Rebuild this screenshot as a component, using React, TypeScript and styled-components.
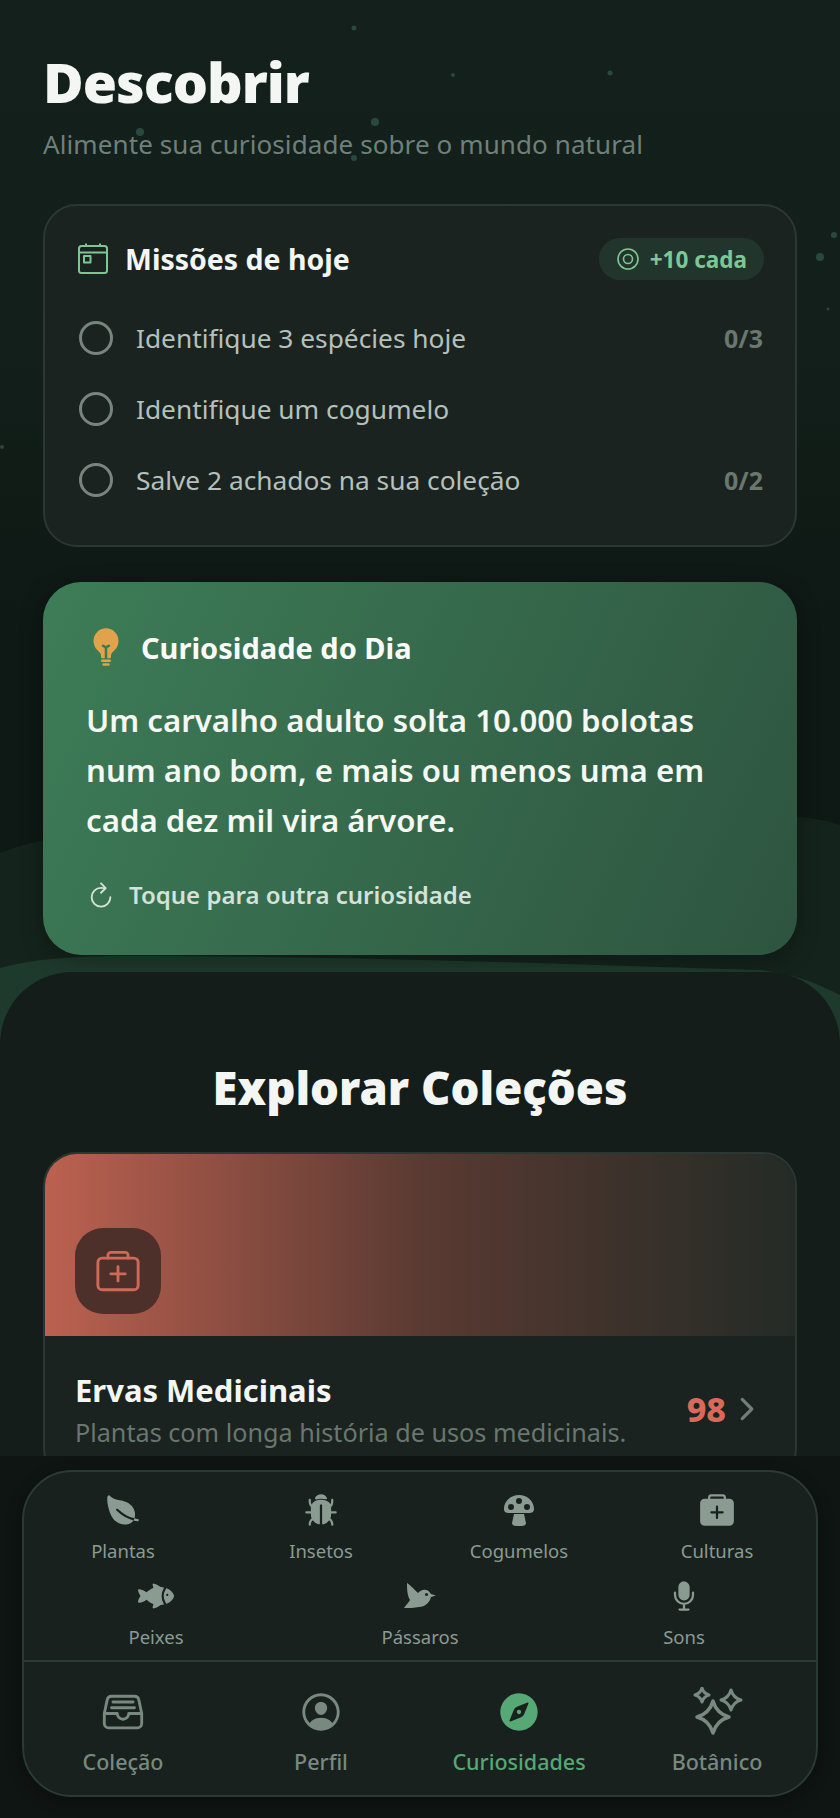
import React from "react";
import styled, { createGlobalStyle } from "styled-components";
import {
  IoBug,
  IoBulb,
  IoChevronForward,
  IoCompass,
  IoFileTrayFullOutline,
  IoFish,
  IoLeaf,
  IoMedkit,
  IoMedkitOutline,
  IoMic,
  IoPersonCircleOutline,
  IoRefreshOutline,
} from "react-icons/io5";

const GlobalStyle = createGlobalStyle`
  html, body {
    margin: 0;
    padding: 0;
    background: #0f1513;
  }
  * {
    box-sizing: border-box;
  }
`;

const Page = styled.div`
  position: relative;
  width: 840px;
  height: 1818px;
  overflow: hidden;
  background: linear-gradient(180deg, #13201b 0px, #131f1a 350px, #0e1814 620px, #0e1814 100%);
  font-family: "Noto Sans", "Open Sans", sans-serif;
  color: #f4f6f4;
`;

const Backdrop = styled.svg`
  position: absolute;
  left: 0;
  top: 0;
`;

const Content = styled.main`
  position: relative;
  padding: 48px 0 0;
`;

const Header = styled.header`
  padding: 0 43px;
`;

const Title = styled.h1`
  margin: 0;
  font-size: 55.5px;
  line-height: 68px;
  font-weight: 900;
  letter-spacing: -1px;
`;

const Subtitle = styled.p`
  margin: 10px 0 0;
  font-size: 26px;
  line-height: 36px;
  letter-spacing: 0.1px;
  color: #6f807a;
`;

const MissionCard = styled.section`
  margin: 42px 43px 0;
  height: 343px;
  padding: 32px 32px 0 32px;
  border: 2px solid #2b3733;
  border-radius: 34px;
  background: #1a2320;
`;

const MissionHead = styled.div`
  display: flex;
  align-items: center;
  justify-content: space-between;
  height: 42px;
`;

const MissionTitle = styled.div`
  display: flex;
  align-items: center;
  gap: 16px;
  font-size: 28.5px;
  font-weight: 700;
`;

const Reward = styled.div`
  display: flex;
  align-items: center;
  gap: 10px;
  height: 42px;
  margin-right: -1px;
  padding: 0 17px;
  border-radius: 21px;
  background: #22352c;
  color: #7ec795;
  font-size: 22.5px;
  font-weight: 700;
`;

const MissionList = styled.ul`
  margin: 22px 0 0;
  padding: 0;
  list-style: none;
`;

const MissionRow = styled.li`
  display: flex;
  align-items: center;
  height: 71px;
  padding-left: 2px;
  font-size: 26.3px;
  color: #b6c0bb;
`;

const Radio = styled.span`
  flex: none;
  width: 34px;
  height: 34px;
  margin-right: 23px;
  border: 3px solid #78857f;
  border-radius: 50%;
`;

const Progress = styled.span`
  margin-left: auto;
  font-size: 25px;
  font-weight: 700;
  color: #69776f;
`;

const FactCard = styled.section`
  margin: 35px 43px 0;
  height: 373px;
  padding: 44px 43px 0;
  border-radius: 38px;
  background: linear-gradient(115deg, #3d7d57 0%, #2e5440 100%);
  box-shadow: 0 6px 24px rgba(0, 0, 0, 0.28);
`;

const FactHead = styled.div`
  display: flex;
  align-items: center;
  gap: 15px;
  height: 42px;
  font-size: 29px;
  font-weight: 700;
  color: #fafbf8;
`;

const FactText = styled.p`
  margin: 27px 0 0;
  font-size: 31.2px;
  line-height: 50px;
  font-weight: 600;
  color: #f5f7f3;
`;

const FactHint = styled.div`
  display: flex;
  align-items: center;
  gap: 13px;
  margin-top: 33px;
  font-size: 24px;
  font-weight: 600;
  color: #d4e2d8;
`;

const Sheet = styled.section`
  margin-top: 17px;
  height: 900px;
  padding-top: 83px;
  border-radius: 72px 72px 0 0;
  background: #141d19;
`;

const SheetTitle = styled.h2`
  margin: 0;
  text-align: center;
  font-size: 45.5px;
  line-height: 64px;
  font-weight: 900;
`;

const CollectionCard = styled.article`
  margin: 33px 43px 0;
  border: 2px solid #2a3733;
  border-radius: 34px;
  background: #1a2320;
  overflow: hidden;
`;

const CollectionBanner = styled.div`
  display: flex;
  align-items: flex-end;
  height: 182px;
  padding: 0 0 22px 30px;
  background: linear-gradient(90deg, #bc6150 0%, #5a3a32 50%, #242b26 100%);
`;

const BannerIcon = styled.div`
  display: flex;
  align-items: center;
  justify-content: center;
  width: 86px;
  height: 86px;
  border-radius: 28px;
  background: #4e302a;
  color: #d06a58;
`;

const CollectionBody = styled.div`
  display: flex;
  align-items: center;
  justify-content: space-between;
  padding: 31px 31px 30px 30px;
`;

const CollectionName = styled.div`
  font-size: 31px;
  line-height: 47px;
  font-weight: 700;
`;

const CollectionDesc = styled.div`
  font-size: 25.2px;
  line-height: 36px;
  color: #69776f;
`;

const CollectionCount = styled.div`
  display: flex;
  align-items: center;
  gap: 4px;
  font-size: 34px;
  font-weight: 800;
  color: #d9695a;
`;

const NavArea = styled.nav`
  position: absolute;
  left: 0;
  right: 0;
  bottom: 0;
  height: 362px;
  padding: 14px 22px 0;
  background: #0f1513;
`;

const NavCard = styled.div`
  height: 327px;
  border: 2px solid #2c3a36;
  border-radius: 50px;
  background: #18211e;
  box-shadow: 0 4px 16px rgba(0, 0, 0, 0.3);
  overflow: hidden;
`;

const CategoryRow = styled.div<{ $cols: number; $height: number; $top?: number }>`
  display: grid;
  grid-template-columns: repeat(${(p) => p.$cols}, 1fr);
  height: ${(p) => p.$height}px;
  padding-top: ${(p) => p.$top ?? 0}px;
`;

const Category = styled.div`
  display: flex;
  flex-direction: column;
  align-items: center;
  color: #8a9b92;
  font-size: 18.5px;
  line-height: 24px;
`;

const CategoryIcon = styled.div`
  display: flex;
  align-items: center;
  justify-content: center;
  height: 36px;
  margin: 0 0 11px;
`;

const TabBar = styled.div`
  display: grid;
  grid-template-columns: repeat(4, 1fr);
  margin-top: 2px;
  border-top: 2px solid #2c3a36;
  padding-top: 26px;
`;

const Tab = styled.div<{ $active?: boolean }>`
  display: flex;
  flex-direction: column;
  align-items: center;
  color: ${(p) => (p.$active ? "#56a874" : "#78897f")};
  font-size: 21.5px;
  line-height: 30px;
  font-weight: 500;
`;

const TabIcon = styled.div`
  display: flex;
  align-items: center;
  justify-content: center;
  height: 48px;
  margin-bottom: 11px;

  svg {
    flex: none;
  }
`;

const particles = [
  [354, 28, 2.5],
  [453, 75, 2],
  [610, 73, 2.5],
  [375, 122, 4],
  [140, 132, 4],
  [354, 158, 3],
  [834, 235, 3],
  [820, 257, 4],
  [828, 309, 1.5],
  [2, 447, 2],
];

const MissionIcon = () => (
  <svg width="32" height="32" viewBox="0 0 32 32" fill="none" stroke="#7ec795" strokeWidth="2" strokeLinejoin="round">
    <rect x="2" y="3" width="28" height="27" rx="2.5" />
    <path d="M2 9.5h28M9 0.5v3M23 0.5v3" />
    <rect x="7" y="13" width="6.5" height="6.5" />
  </svg>
);

const TargetIcon = () => (
  <svg width="24" height="24" viewBox="0 0 24 24" fill="none" stroke="#7ec795" strokeWidth="1.6">
    <circle cx="12" cy="12" r="10" />
    <circle cx="12" cy="12" r="4.5" />
  </svg>
);

const MushroomIcon = () => (
  <svg width="32" height="32" viewBox="0 0 32 32">
    <path
      fillRule="evenodd"
      fill="#8a9b92"
      d="M16 1C8 1 1 7 1 15c0 3 2 4 5 4h20c3 0 5-1 5-4C31 7 24 1 16 1zM16 4a3 3 0 1 1 0 6 3 3 0 0 1 0-6zM8 10a3 3 0 1 1 0 6 3 3 0 0 1 0-6zM24 10a3 3 0 1 1 0 6 3 3 0 0 1 0-6z"
    />
    <path fill="#8a9b92" d="M11 20h10l2 9c0 2-2 3-4 3h-6c-2 0-4-1-4-3z" />
  </svg>
);

const BirdIcon = () => (
  <svg width="42" height="36" viewBox="5 7 42 36">
    <path
      fill="#8a9b92"
      d="M13 12C15 13 20 18 24 22C26 20 29 18 32 19C35 19 36 22 37 23L42 24.5L37 26C36 31 31 36 25 36C20 37 15 37 10 37C13 33 15 31 16 29C13 24 13 17 13 12Z"
    />
    <circle cx="32.5" cy="23.5" r="1.5" fill="#18211e" />
  </svg>
);

const star = (cx: number, cy: number, r: number) => {
  const k = r * 0.22;
  return `M${cx} ${cy - r}Q${cx + k} ${cy - k} ${cx + r} ${cy}Q${cx + k} ${cy + k} ${cx} ${cy + r}Q${cx - k} ${cy + k} ${cx - r} ${cy}Q${cx - k} ${cy - k} ${cx} ${cy - r}Z`;
};

const SparkleIcon = () => (
  <svg width="58" height="50" viewBox="7 8 58 50" fill="none" stroke="#78897f" strokeLinejoin="round">
    <path d={star(32, 38, 16)} strokeWidth="3.5" />
    <path d={star(21, 16, 7)} strokeWidth="3" />
    <path d={star(50, 21, 10)} strokeWidth="3" />
  </svg>
);

export default function App() {
  return (
    <Page>
      <GlobalStyle />
      <Backdrop width="840" height="1100" viewBox="0 0 840 1100">
        <path d="M0 853C20 845 40 840 70 836L780 818C800 816 820 818 840 825L840 1100L0 1100Z" fill="#14231c" />
        <path d="M0 968C30 960 60 957 110 956C300 955 500 962 760 970C800 975 820 985 840 995L840 1100L0 1100Z" fill="#1e3a2c" />
        {particles.map(([x, y, r]) => (
          <circle key={`${x}-${y}`} cx={x} cy={y} r={r} fill="#29493f" />
        ))}
      </Backdrop>
      <Content>
        <Header>
          <Title>Descobrir</Title>
          <Subtitle>Alimente sua curiosidade sobre o mundo natural</Subtitle>
        </Header>

        <MissionCard>
          <MissionHead>
            <MissionTitle>
              <MissionIcon />
              Missões de hoje
            </MissionTitle>
            <Reward>
              <TargetIcon />
              +10 cada
            </Reward>
          </MissionHead>
          <MissionList>
            <MissionRow>
              <Radio />
              Identifique 3 espécies hoje
              <Progress>0/3</Progress>
            </MissionRow>
            <MissionRow>
              <Radio />
              Identifique um cogumelo
            </MissionRow>
            <MissionRow>
              <Radio />
              Salve 2 achados na sua coleção
              <Progress>0/2</Progress>
            </MissionRow>
          </MissionList>
        </MissionCard>

        <FactCard>
          <FactHead>
            <IoBulb size={40} color="#e0a24a" />
            Curiosidade do Dia
          </FactHead>
          <FactText>
            Um carvalho adulto solta 10.000 bolotas num ano bom, e mais ou menos uma em cada dez mil vira árvore.
          </FactText>
          <FactHint>
            <IoRefreshOutline size={30} />
            Toque para outra curiosidade
          </FactHint>
        </FactCard>

        <Sheet>
          <SheetTitle>Explorar Coleções</SheetTitle>
          <CollectionCard>
            <CollectionBanner>
              <BannerIcon>
                <IoMedkitOutline size={46} />
              </BannerIcon>
            </CollectionBanner>
            <CollectionBody>
              <div>
                <CollectionName>Ervas Medicinais</CollectionName>
                <CollectionDesc>Plantas com longa história de usos medicinais.</CollectionDesc>
              </div>
              <CollectionCount>
                98
                <IoChevronForward size={34} color="#6f7f78" />
              </CollectionCount>
            </CollectionBody>
          </CollectionCard>
        </Sheet>
      </Content>

      <NavArea>
        <NavCard>
          <CategoryRow $cols={4} $height={106} $top={20}>
            <Category>
              <CategoryIcon><IoLeaf size={36} /></CategoryIcon>
              Plantas
            </Category>
            <Category>
              <CategoryIcon><IoBug size={36} /></CategoryIcon>
              Insetos
            </Category>
            <Category>
              <CategoryIcon><MushroomIcon /></CategoryIcon>
              Cogumelos
            </Category>
            <Category>
              <CategoryIcon><IoMedkit size={36} /></CategoryIcon>
              Culturas
            </Category>
          </CategoryRow>
          <CategoryRow $cols={3} $height={80}>
            <Category>
              <CategoryIcon><IoFish size={36} /></CategoryIcon>
              Peixes
            </Category>
            <Category>
              <CategoryIcon><BirdIcon /></CategoryIcon>
              Pássaros
            </Category>
            <Category>
              <CategoryIcon><IoMic size={36} /></CategoryIcon>
              Sons
            </Category>
          </CategoryRow>
          <TabBar>
            <Tab>
              <TabIcon><IoFileTrayFullOutline size={46} /></TabIcon>
              Coleção
            </Tab>
            <Tab>
              <TabIcon><IoPersonCircleOutline size={46} /></TabIcon>
              Perfil
            </Tab>
            <Tab $active>
              <TabIcon><IoCompass size={46} /></TabIcon>
              Curiosidades
            </Tab>
            <Tab>
              <TabIcon><SparkleIcon /></TabIcon>
              Botânico
            </Tab>
          </TabBar>
        </NavCard>
      </NavArea>
    </Page>
  );
}
